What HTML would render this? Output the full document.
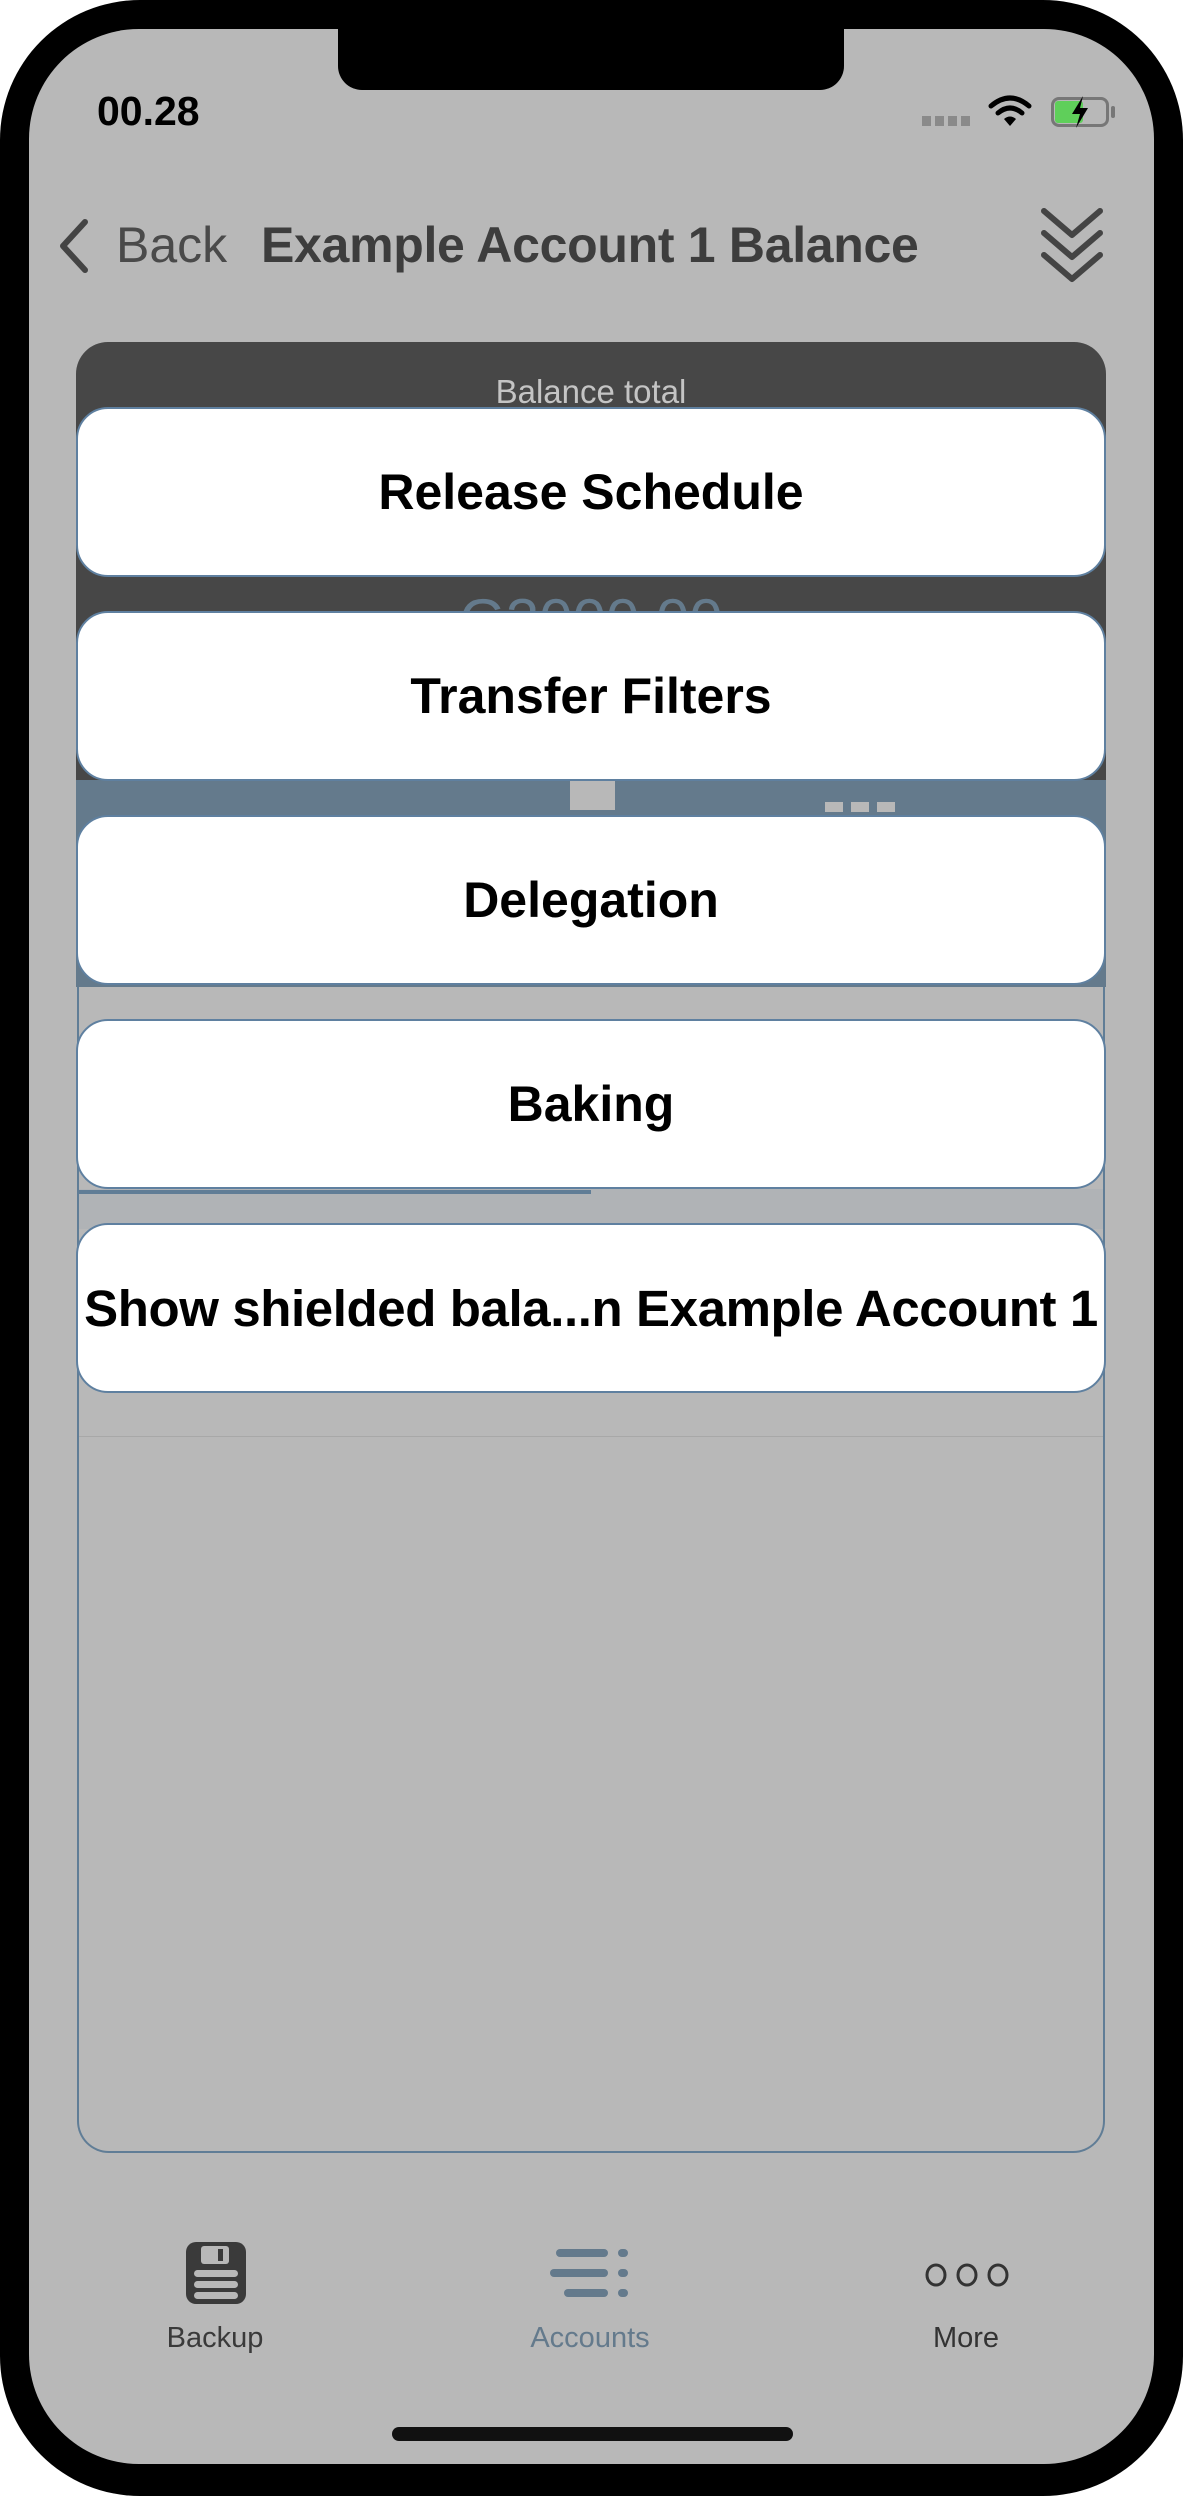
<!DOCTYPE html>
<html><head><meta charset="utf-8"><style>
*{margin:0;padding:0;box-sizing:border-box}
html,body{width:1183px;height:2496px;background:#fff;overflow:hidden;font-family:"Liberation Sans",sans-serif}
.frame{position:absolute;left:0;top:0;width:1183px;height:2496px;background:#000;border-radius:140px}
.screen{position:absolute;left:29px;top:29px;width:1125px;height:2435px;background:#b8b8b8;border-radius:110px;overflow:hidden}
.abs{position:absolute}
.btn{position:absolute;left:76px;width:1030px;height:170px;background:#fff;border:2px solid #5f80a0;border-radius:32px;display:flex;align-items:center;justify-content:center;font-weight:bold;font-size:50px;color:#000;white-space:nowrap;overflow:hidden}
.lbl{position:absolute;top:2322px;font-size:29px;text-align:center;width:200px}
</style></head><body>
<div class="frame"></div>
<div class="screen"></div>
<div class="abs" style="left:338px;top:0;width:506px;height:90px;background:#000;border-radius:0 0 24px 24px"></div>
<div class="abs" style="left:97px;top:88px;font-size:41px;font-weight:bold;color:#000">00.28</div>
<div class="abs" style="left:922px;top:116px;width:50px;height:10px;background:repeating-linear-gradient(90deg,#8a8a8a 0 9px,transparent 9px 13px)"></div>
<svg class="abs" style="left:988px;top:94px" width="44" height="34" viewBox="0 0 44 34"><path d="M3 12 Q22 -4 41 12" stroke="#000" stroke-width="5" fill="none" stroke-linecap="round"/><path d="M10 19 Q22 9 34 19" stroke="#000" stroke-width="5" fill="none" stroke-linecap="round"/><path d="M16 25 L22 32 L28 25 Q22 20 16 25Z" fill="#000"/></svg>
<div class="abs" style="left:1051px;top:97px;width:58px;height:30px;border:3px solid #777;border-radius:8px"></div>
<div class="abs" style="left:1055px;top:101px;width:28px;height:22px;background:#5fcf5a;border-radius:3px"></div>
<div class="abs" style="left:1111px;top:106px;width:4px;height:12px;background:#777;border-radius:2px"></div>
<svg class="abs" style="left:1066px;top:94px" width="28" height="36" viewBox="0 0 28 36"><path d="M17 2 L6 20 H14 L10 34 L22 14 H14 Z" fill="#000"/></svg>
<svg class="abs" style="left:55px;top:218px" width="36" height="56" viewBox="0 0 36 56"><path d="M30 4 L8 28 L30 52" stroke="#444" stroke-width="6" fill="none" stroke-linecap="round" stroke-linejoin="round"/></svg>
<div class="abs" style="left:116px;top:216px;font-size:50px;color:#4a4a4a">Back</div>
<div class="abs" style="left:261px;top:216px;font-size:50px;font-weight:bold;color:#3d3d3d;letter-spacing:-0.3px">Example Account 1 Balance</div>
<svg class="abs" style="left:1040px;top:205px" width="64" height="80" viewBox="0 0 64 80"><g stroke="#444" stroke-width="6" fill="none" stroke-linecap="round" stroke-linejoin="round"><path d="M4 6 L32 30 L60 6"/><path d="M4 28 L32 52 L60 28"/><path d="M4 50 L32 74 L60 50"/></g></svg>
<div class="abs" style="left:76px;top:342px;width:1030px;height:445px;background:#474747;border-radius:32px 32px 0 0"></div>
<div class="abs" style="left:76px;top:780px;width:1030px;height:207px;background:#647a8c"></div>
<div class="abs" style="left:76px;top:373px;width:1030px;text-align:center;font-size:33px;color:#c4c4c4">Balance total</div>
<div class="abs" style="left:76px;top:586px;width:1030px;text-align:center;font-size:60px;color:#647a8c">G3000.00</div>
<div class="abs" style="left:570px;top:780px;width:45px;height:30px;background:#b8b8b8"></div>
<div class="abs" style="left:825px;top:802px;width:70px;height:10px;background:repeating-linear-gradient(90deg,#b8b8b8 0 18px,transparent 18px 26px)"></div>
<div class="abs" style="left:77px;top:987px;width:1028px;height:1166px;border:2px solid #607d96;border-radius:0 0 32px 32px;border-top:none"></div>
<div class="abs" style="left:79px;top:1189px;width:1024px;height:40px;background:#b0b3b6"></div>
<div class="abs" style="left:79px;top:1190px;width:512px;height:4px;background:#607d96"></div>
<div class="abs" style="left:79px;top:1436px;width:1024px;height:1px;background:#a8a8a8"></div>
<div class="btn" style="top:407px">Release Schedule</div>
<div class="btn" style="top:611px">Transfer Filters</div>
<div class="btn" style="top:815px">Delegation</div>
<div class="btn" style="top:1019px">Baking</div>
<div class="btn" style="top:1223px;font-size:51px;letter-spacing:-0.4px">Show shielded bala...n Example Account 1</div>
<svg class="abs" style="left:186px;top:2242px" width="60" height="62" viewBox="0 0 60 62"><rect x="0" y="0" width="60" height="62" rx="10" fill="#3a3a3a"/><rect x="15" y="4" width="28" height="18" rx="3" fill="#b8b8b8"/><rect x="32" y="7" width="5" height="12" fill="#3a3a3a"/><rect x="8" y="28" width="44" height="7" rx="3.5" fill="#b8b8b8"/><rect x="8" y="39" width="44" height="7" rx="3.5" fill="#b8b8b8"/><rect x="8" y="50" width="44" height="7" rx="3.5" fill="#b8b8b8"/></svg>
<svg class="abs" style="left:550px;top:2249px" width="82" height="50" viewBox="0 0 82 50"><g stroke="#647a8c" stroke-width="8" stroke-linecap="round"><path d="M10 4 H54"/><path d="M72 4 H74"/><path d="M4 24 H54"/><path d="M72 24 H74"/><path d="M18 44 H54"/><path d="M72 44 H74"/></g></svg>
<svg class="abs" style="left:924px;top:2262px" width="86" height="26" viewBox="0 0 86 26"><g stroke="#333" stroke-width="3" fill="none"><ellipse cx="12" cy="13" rx="9" ry="10"/><ellipse cx="43" cy="13" rx="9" ry="10"/><ellipse cx="74" cy="13" rx="9" ry="10"/></g></svg>
<div class="lbl" style="left:115px;color:#3a3a3a">Backup</div>
<div class="lbl" style="left:490px;color:#647a8c">Accounts</div>
<div class="lbl" style="left:866px;color:#333">More</div>
<div class="abs" style="left:392px;top:2427px;width:401px;height:14px;background:#111;border-radius:7px"></div>
</body></html>
